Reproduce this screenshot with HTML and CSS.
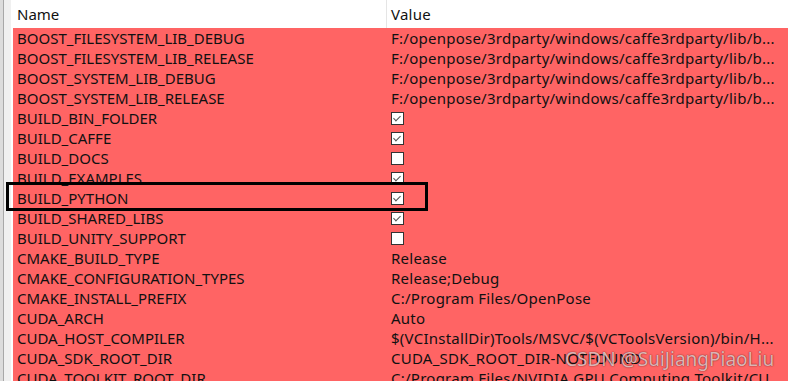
FILE: index.html
```html
<!DOCTYPE html>
<html lang="en">
<head>
    <meta charset="UTF-8">
    <title>CMake Cache</title>
    <link rel="stylesheet" href="styles.css">
</head>
<body>
    <div class="window">
        <div class="gutter"></div>
        <div class="table">
            <div class="header">
                <div class="col-name">Name</div>
                <div class="col-value">Value</div>
            </div>
            <div class="row"><div class="col-name">BOOST_FILESYSTEM_LIB_DEBUG</div><div class="col-value">F:/openpose/3rdparty/windows/caffe3rdparty/lib/b...</div></div>
            <div class="row"><div class="col-name">BOOST_FILESYSTEM_LIB_RELEASE</div><div class="col-value">F:/openpose/3rdparty/windows/caffe3rdparty/lib/b...</div></div>
            <div class="row"><div class="col-name">BOOST_SYSTEM_LIB_DEBUG</div><div class="col-value">F:/openpose/3rdparty/windows/caffe3rdparty/lib/b...</div></div>
            <div class="row"><div class="col-name">BOOST_SYSTEM_LIB_RELEASE</div><div class="col-value">F:/openpose/3rdparty/windows/caffe3rdparty/lib/b...</div></div>
            <div class="row"><div class="col-name">BUILD_BIN_FOLDER</div><div class="col-value"><span class="check on"></span></div></div>
            <div class="row"><div class="col-name">BUILD_CAFFE</div><div class="col-value"><span class="check on"></span></div></div>
            <div class="row"><div class="col-name">BUILD_DOCS</div><div class="col-value"><span class="check"></span></div></div>
            <div class="row"><div class="col-name">BUILD_EXAMPLES</div><div class="col-value"><span class="check on"></span></div></div>
            <div class="row"><div class="col-name">BUILD_PYTHON</div><div class="col-value"><span class="check on"></span></div></div>
            <div class="row"><div class="col-name">BUILD_SHARED_LIBS</div><div class="col-value"><span class="check on"></span></div></div>
            <div class="row"><div class="col-name">BUILD_UNITY_SUPPORT</div><div class="col-value"><span class="check"></span></div></div>
            <div class="row"><div class="col-name">CMAKE_BUILD_TYPE</div><div class="col-value">Release</div></div>
            <div class="row"><div class="col-name">CMAKE_CONFIGURATION_TYPES</div><div class="col-value">Release;Debug</div></div>
            <div class="row"><div class="col-name">CMAKE_INSTALL_PREFIX</div><div class="col-value">C:/Program Files/OpenPose</div></div>
            <div class="row"><div class="col-name">CUDA_ARCH</div><div class="col-value">Auto</div></div>
            <div class="row"><div class="col-name">CUDA_HOST_COMPILER</div><div class="col-value">$(VCInstallDir)Tools/MSVC/$(VCToolsVersion)/bin/H...</div></div>
            <div class="row"><div class="col-name">CUDA_SDK_ROOT_DIR</div><div class="col-value">CUDA_SDK_ROOT_DIR-NOTFOUND</div></div>
            <div class="row"><div class="col-name">CUDA_TOOLKIT_ROOT_DIR</div><div class="col-value">C:/Program Files/NVIDIA GPU Computing Toolkit/CU...</div></div>
        </div>
        <div class="highlight"></div>
        <div class="watermark">CSDN @SuiJiangPiaoLiu</div>
    </div>
</body>
</html>
```

FILE: styles.css
```css
body {
    margin: 0;
    background-color: #fff;
    font-family: "Noto Sans", "Open Sans", sans-serif;
    font-size: 15px;
    color: #111;
    overflow: hidden;
}

.window {
    position: relative;
    display: flex;
    height: 381px;
}

.gutter {
    width: 8px;
    flex: none;
    background-color: #f0f0f0;
    border-left: 3px solid #dcdcdc;
    border-right: 2px solid #fff;
    box-shadow: inset 1px 0 0 #a8a8a8;
}

.table {
    flex: 1;
}

.header,
.row {
    display: grid;
    grid-template-columns: 373px 1fr;
}

.header {
    height: 28px;
    align-items: center;
    background-color: #fff;
}

.header .col-value {
    border-left: 1px solid #e5e5e5;
    height: 28px;
    line-height: 28px;
    padding-left: 4px;
}

.row {
    height: 20px;
    line-height: 20px;
    background-color: #ff6464;
}

.col-name {
    padding-left: 4px;
    white-space: nowrap;
    overflow: hidden;
}

.col-value {
    padding-left: 5px;
    white-space: nowrap;
    overflow: hidden;
    display: flex;
    align-items: center;
    letter-spacing: 0.25px;
}

.check {
    width: 11px;
    height: 11px;
    border: 1px solid #333;
    background-color: #fff;
    position: relative;
}

.check.on::after {
    content: "";
    position: absolute;
    left: 3px;
    top: 1px;
    width: 3px;
    height: 6px;
    border-right: 1.5px solid #555;
    border-bottom: 1.5px solid #555;
    transform: rotate(45deg);
}

.highlight {
    position: absolute;
    left: 6px;
    top: 182px;
    width: 416px;
    height: 23px;
    border: 3px solid #000;
}

.watermark {
    position: absolute;
    left: 565px;
    top: 346px;
    font-size: 19px;
    color: rgba(255, 220, 220, 0.8);
    text-shadow: 0 0 1px rgba(0, 0, 0, 0.6), 0 0 2px rgba(0, 0, 0, 0.3);
}
```
